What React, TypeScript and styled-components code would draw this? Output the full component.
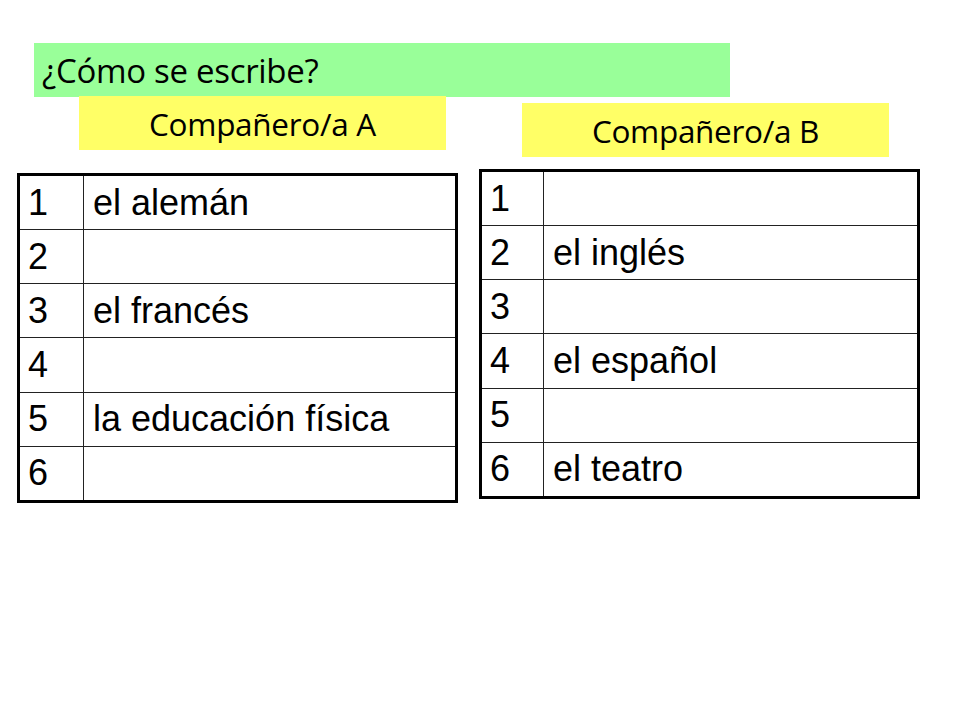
import React from "react";
import styled, { createGlobalStyle } from "styled-components";

const Global = createGlobalStyle`
  html, body { margin: 0; padding: 0; background: #ffffff; }
  body { width: 960px; height: 720px; overflow: hidden; }
`;

const Page = styled.div`
  width: 960px;
  height: 720px;
  box-sizing: border-box;
  padding-top: 43px;
  background: #ffffff;
  font-family: "Open Sans", "Liberation Sans", sans-serif;
  color: #000;
`;

const TitleBar = styled.div`
  margin-left: 34px;
  width: 696px;
  height: 54px;
  box-sizing: border-box;
  padding-left: 8px;
  background: #99ff99;
  display: flex;
  align-items: center;
  font-size: 33px;
  letter-spacing: -0.3px;
`;

const Columns = styled.div`
  display: flex;
  align-items: flex-start;
  gap: 21px;
  padding-left: 17px;
`;

const Column = styled.div<{ $labelTop: number; $labelLeft: number; $tableTop: number }>`
  width: 441px;
  display: flex;
  flex-direction: column;
  & > .label {
    margin-top: ${(p) => p.$labelTop}px;
    margin-left: ${(p) => p.$labelLeft}px;
  }
  & > table {
    margin-top: ${(p) => p.$tableTop}px;
  }
`;

const Label = styled.div`
  width: 367px;
  height: 54px;
  background: #ffff66;
  display: flex;
  align-items: center;
  justify-content: center;
  font-size: 31.5px;
  letter-spacing: -0.3px;
`;

const Table = styled.table`
  width: 441px;
  height: 330px;
  border-collapse: collapse;
  border: 3px solid #000;
  font-family: "Liberation Sans", Arial, sans-serif;
  font-size: 36px;
  table-layout: fixed;
`;

const NumCell = styled.td<{ $w: number }>`
  width: ${(p) => p.$w}px;
  height: 52px;
  padding: 0 0 0 8px;
  border: 1px solid #222;
  vertical-align: middle;
  line-height: 1;
`;

const TextCell = styled.td`
  padding: 0 0 0 9px;
  border: 1px solid #222;
  vertical-align: middle;
  line-height: 1;
  white-space: nowrap;
`;

type Row = { n: number; text: string };

const rowsA: Row[] = [
  { n: 1, text: "el alemán" },
  { n: 2, text: "" },
  { n: 3, text: "el francés" },
  { n: 4, text: "" },
  { n: 5, text: "la educación física" },
  { n: 6, text: "" },
];

const rowsB: Row[] = [
  { n: 1, text: "" },
  { n: 2, text: "el inglés" },
  { n: 3, text: "" },
  { n: 4, text: "el español" },
  { n: 5, text: "" },
  { n: 6, text: "el teatro" },
];

const WordTable = ({ rows, numWidth }: { rows: Row[]; numWidth: number }) => (
  <Table>
    <tbody>
      {rows.map((r) => (
        <tr key={r.n}>
          <NumCell $w={numWidth}>{r.n}</NumCell>
          <TextCell>{r.text}</TextCell>
        </tr>
      ))}
    </tbody>
  </Table>
);

export default function App() {
  return (
    <>
      <Global />
      <Page>
        <TitleBar>¿Cómo se escribe?</TitleBar>
        <Columns>
          <Column $labelTop={-1} $labelLeft={62} $tableTop={23}>
            <Label className="label">Compañero/a A</Label>
            <WordTable rows={rowsA} numWidth={55} />
          </Column>
          <Column $labelTop={6} $labelLeft={43} $tableTop={12}>
            <Label className="label">Compañero/a B</Label>
            <WordTable rows={rowsB} numWidth={53} />
          </Column>
        </Columns>
      </Page>
    </>
  );
}
